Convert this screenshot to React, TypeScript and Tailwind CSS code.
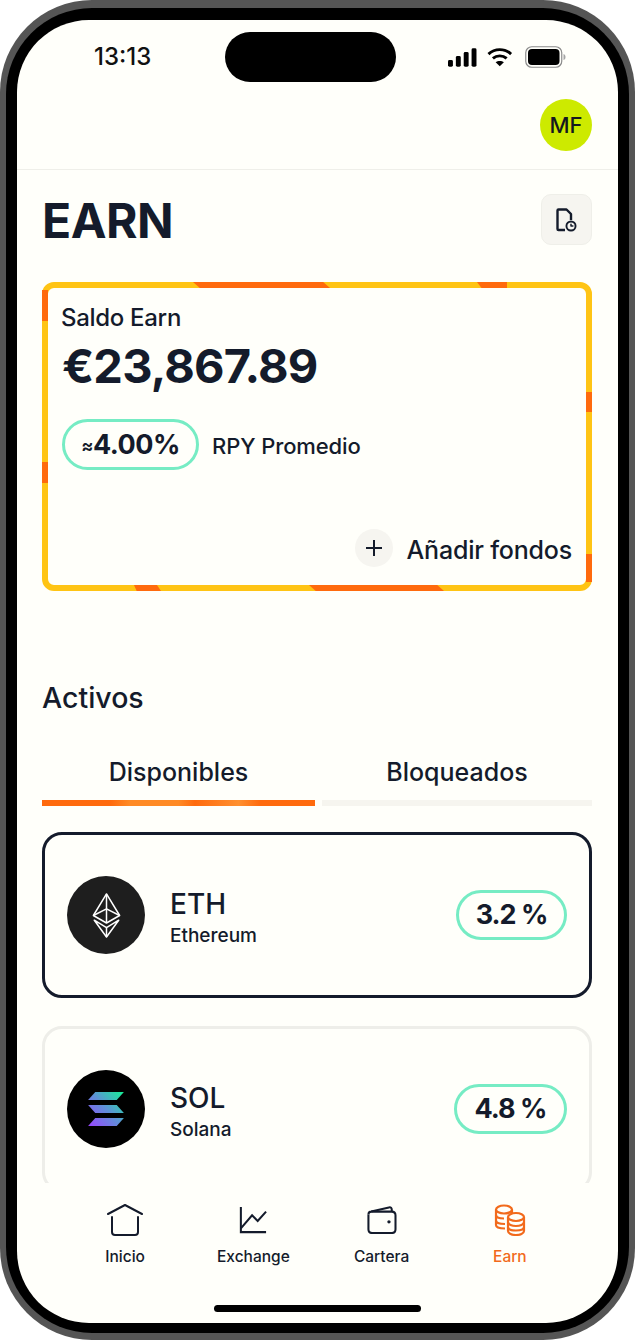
import React from 'react'

function Signal() {
  return (
    <svg width="30" height="19" viewBox="0 0 30 19" fill="#000">
      <rect x="0" y="12" width="5" height="7" rx="1.5" />
      <rect x="8" y="8" width="5" height="11" rx="1.5" />
      <rect x="16" y="4" width="5" height="15" rx="1.5" />
      <rect x="24" y="0" width="5" height="19" rx="1.5" />
    </svg>
  )
}

function Wifi() {
  return (
    <svg width="26" height="20" viewBox="0 0 26 20" fill="none" stroke="#000" strokeWidth="3">
      <path d="M1.5 7 C8 1 18 1 24.5 7" />
      <path d="M6 11.5 C10 8 16 8 20 11.5" />
      <path d="M13 19.5 L8.8 15.4 C11 13.6 15 13.6 17.2 15.4 Z" fill="#000" stroke="none" />
    </svg>
  )
}

function Battery() {
  return (
    <svg width="41" height="22" viewBox="0 0 41 22" fill="none">
      <rect x="0.75" y="0.75" width="36" height="20.5" rx="6" stroke="#8b8b8b" strokeWidth="1.2" />
      <rect x="3" y="3" width="31.5" height="16" rx="4" fill="#000" />
      <path d="M38.5 8 C40 8.5 40.5 9.5 40.5 11 C40.5 12.5 40 13.5 38.5 14 Z" fill="#a5a5a5" />
    </svg>
  )
}

function ReportIcon() {
  return (
    <svg width="21" height="24" viewBox="0 0 21 24" fill="none" stroke="#141b2b" strokeWidth="2.4" strokeLinejoin="round">
      <path d="M9 22 H2.5 Q1.5 22 1.5 21 V2.5 Q1.5 1.5 2.5 1.5 H10.5 L15 6 V12" />
      <circle cx="15" cy="18" r="5.5" fill="#141b2b" stroke="none" />
      <circle cx="15" cy="18" r="3.6" fill="#f6f5f0" stroke="none" />
      <path d="M15 15.8 V18 H17.4" strokeWidth="1.5" />
    </svg>
  )
}

function EthLogo() {
  return (
    <svg width="29" height="45" viewBox="0 0 30 48" fill="none" stroke="#fff" strokeWidth="1.6" strokeLinejoin="round">
      <path d="M15 1 L29 24 L15 32 L1 24 Z" />
      <path d="M15 1 V32" />
      <path d="M1 24 L15 17 L29 24" />
      <path d="M2 29 L15 37 L28 29 L15 47 Z" />
      <path d="M15 37 V47" />
    </svg>
  )
}

function SolLogo() {
  return (
    <svg width="38" height="34" viewBox="0 0 40 38">
      <defs>
        <linearGradient id="sol" x1="0" y1="38" x2="40" y2="0" gradientUnits="userSpaceOnUse">
          <stop offset="0" stopColor="#9a45ff" />
          <stop offset="0.5" stopColor="#5f8fd8" />
          <stop offset="1" stopColor="#14f195" />
        </linearGradient>
      </defs>
      <path d="M8 0 H40 L32 9 H0 Z" fill="url(#sol)" />
      <path d="M0 14.5 H32 L40 23.5 H8 Z" fill="url(#sol)" />
      <path d="M8 29 H40 L32 38 H0 Z" fill="url(#sol)" />
    </svg>
  )
}

function HomeIcon() {
  return (
    <svg width="36" height="32" viewBox="0 0 36 32" fill="none" stroke="#141b2b" strokeWidth="2" strokeLinecap="round" strokeLinejoin="round">
      <path d="M1 10 L18 1 L35 10" />
      <path d="M5 13 V28 Q5 31 8 31 H28 Q31 31 31 28 V13" />
    </svg>
  )
}

function ChartIcon() {
  return (
    <svg width="28" height="28" viewBox="0 0 30 30" fill="none" stroke="#141b2b" strokeWidth="2.2">
      <path d="M2 1 V28 H29" />
      <path d="M2 24 L14 10 L20 16 L29 6" />
    </svg>
  )
}

function WalletIcon() {
  return (
    <svg width="31" height="28" viewBox="0 0 32 30" fill="none" stroke="#141b2b" strokeWidth="2.2" strokeLinejoin="round">
      <path d="M2 9 Q2 6 5 6 L24 1.5 Q27 1 27 4 V6" />
      <path d="M5 6 H27 Q31 6 31 10 V25 Q31 29 27 29 H6 Q2 29 2 25 V9" />
      <circle cx="24" cy="17" r="1.8" fill="#141b2b" stroke="none" />
    </svg>
  )
}

function CoinsIcon() {
  return (
    <svg width="32" height="32" viewBox="0 0 32 32" fill="none" stroke="#f26a1b" strokeWidth="2.2">
      <ellipse cx="10" cy="5.5" rx="8" ry="4" />
      <path d="M2 5.5 V21 C2 23 5 24.5 11 24.5" />
      <path d="M18 5.5 V9" />
      <path d="M2 11 C2 13 5 14.5 10 14.5" />
      <path d="M2 16.5 C2 18.5 5 20 11 20" />
      <ellipse cx="22" cy="13" rx="8" ry="4" fill="#fffffa" />
      <path d="M14 13 V27 C14 29.5 18 31 22 31 C26 31 30 29.5 30 27 V13" />
      <path d="M14 18 C14 20.5 18 22 22 22 C26 22 30 20.5 30 18" />
      <path d="M14 23 C14 25.5 18 26.5 22 26.5 C26 26.5 30 25.5 30 23" />
    </svg>
  )
}

function AssetCard({ symbol, name, rate, active, pillWidth, logo, logoBg }: {
  symbol: string
  name: string
  rate: string
  active?: boolean
  pillWidth: string
  logo: React.ReactNode
  logoBg: string
}) {
  return (
    <div className={`h-[166px] shrink-0 rounded-[20px] border-[3px] pl-[22px] pr-[22px] flex items-center ${active ? 'border-[#141b2b]' : 'border-[#eeeee9]'}`}>
      <div className={`w-[78px] h-[78px] rounded-full flex items-center justify-center ${logoBg}`}>{logo}</div>
      <div className="ml-[25px] flex-1 pt-[4px]">
        <div className="text-[28px] leading-[34px] font-medium">{symbol}</div>
        <div className="text-[19px] leading-[24px] mt-[3px] font-medium">{name}</div>
      </div>
      <div className={`h-[50px] rounded-full border-[3px] border-[#76ecc4] flex items-center justify-center text-[27px] font-bold tracking-[-1px] ${pillWidth}`}>{rate}</div>
    </div>
  )
}

function NavItem({ label, icon, active }: { label: string; icon: React.ReactNode; active?: boolean }) {
  return (
    <div className={`flex flex-col items-center ${active ? 'text-[#f26a1b]' : 'text-[#141b2b]'}`}>
      <div className="h-[32px] flex items-center justify-center">{icon}</div>
      <div className="mt-[11px] text-[15.5px] leading-[20px] font-medium">{label}</div>
    </div>
  )
}

export default function App() {
  return (
    <div className="w-[635px] h-[1340px] rounded-[92px] bg-[#555555] pt-[8px] px-[6px] pb-[7px] font-[family-name:Inter,sans-serif] text-[#141b2b]">
      <div className="w-full h-full rounded-[86px] bg-black pt-[12px] px-[11px] pb-[10px]">
        <div className="w-full h-full rounded-[72px] bg-[#fffffa] overflow-hidden flex flex-col">

          {/* status bar */}
          <div className="h-[62px] shrink-0 pt-[12px] pl-[77px] pr-[52px] flex justify-between">
            <div className="h-[50px] w-[100px] flex items-center text-[24px] font-medium text-[#111]">13:13</div>
            <div className="h-[50px] w-[171px] rounded-full bg-black -ml-[22px]"></div>
            <div className="h-[50px] w-[118px] flex items-center gap-[10px]">
              <Signal />
              <Wifi />
              <div className="ml-[2px]"><Battery /></div>
            </div>
          </div>

          {/* header */}
          <div className="h-[88px] shrink-0 border-b border-[#efefe9] pt-[17px] pr-[26px] flex justify-end">
            <div className="w-[52px] h-[52px] rounded-full bg-[#cdea00] flex items-center justify-center text-[22px] font-medium text-[#14181f]">MF</div>
          </div>

          <div className="flex-1 overflow-hidden pl-[25px] pr-[26px] min-h-0">
            <div className="mt-[24px] h-[51px] flex items-center justify-between">
              <h1 className="text-[48px] font-bold tracking-[-0.5px] pt-[2px]">EARN</h1>
              <div className="w-[51px] h-[51px] rounded-[10px] bg-[#f6f5f0] border border-[#efefe9] flex items-center justify-center">
                <ReportIcon />
              </div>
            </div>

            {/* saldo card */}
            <div className="relative mt-[37px] h-[309px] rounded-[12px] border-[6px] border-[#ffc414] pl-[14px] pr-[14px] pt-[16px]">
              <span className="absolute -top-[6px] left-[145px] w-[137px] h-[6px] bg-[#ff6a0d] [clip-path:polygon(0_0,95%_0,100%_100%,5%_100%)]"></span>
              <span className="absolute -top-[6px] left-[429px] w-[30px] h-[6px] bg-[#ff6a0d] [clip-path:polygon(0_0,100%_0,100%_100%,15%_100%)]"></span>
              <span className="absolute -left-[6px] top-[2px] w-[6px] h-[31px] bg-[#ff6a0d]"></span>
              <span className="absolute -left-[6px] top-[174px] w-[6px] h-[21px] bg-[#ff6a0d]"></span>
              <span className="absolute -right-[6px] top-[104px] w-[6px] h-[20px] bg-[#ff6a0d]"></span>
              <span className="absolute -right-[6px] top-[266px] w-[6px] h-[28px] bg-[#ff6a0d]"></span>
              <span className="absolute -bottom-[6px] left-[86px] w-[27px] h-[6px] bg-[#ff6a0d] [clip-path:polygon(0_0,85%_0,100%_100%,10%_100%)]"></span>
              <span className="absolute -bottom-[6px] left-[261px] w-[135px] h-[6px] bg-[#ff6a0d] [clip-path:polygon(0_0,95%_0,100%_100%,5%_100%)]"></span>

              <div className="text-[24px] leading-[28px] font-medium tracking-[-0.3px] -ml-[1px]">Saldo Earn</div>
              <div className="mt-[7px] text-[47px] leading-[54px] font-bold tracking-[-0.8px]">€23,867.89</div>
              <div className="mt-[26px] flex items-center">
                <div className="w-[137px] h-[51px] pt-[2px] rounded-full border-[3px] border-[#76ecc4] flex items-center justify-center text-[27px] font-bold tracking-[-0.5px]">
                  <span className="text-[18px]">≈</span>4.00%
                </div>
                <div className="ml-[13px] pt-[3px] text-[22px] font-medium tracking-[-0.1px]">RPY Promedio</div>
              </div>
              <div className="mt-[57px] flex items-center justify-end">
                <div className="w-[38px] h-[38px] rounded-full bg-[#f6f5f0] flex items-center justify-center">
                  <svg width="16" height="16" viewBox="0 0 16 16" stroke="#141b2b" strokeWidth="2"><path d="M8 0 V16 M0 8 H16" /></svg>
                </div>
                <div className="ml-[14px] pt-[5px] text-[25px] font-medium tracking-[-0.2px]">Añadir fondos</div>
              </div>
            </div>

            <h2 className="mt-[91px] text-[28.5px] leading-[32px] font-medium">Activos</h2>

            {/* tabs */}
            <div className="mt-[42px] flex gap-[7px]">
              <div className="w-[273px] flex flex-col items-center">
                <div className="text-[25px] leading-[30px] font-medium h-[44px] pt-[1px]">Disponibles</div>
                <div className="w-full h-[6px] bg-[linear-gradient(90deg,#ff6a0d_0%,#ff6a0d_25%,#ff8a25_32%,#ff8a25_50%,#ff6a0d_56%,#ff9030_72%,#ff6a0d_80%,#ff6a0d_100%)]"></div>
              </div>
              <div className="flex-1 flex flex-col items-center">
                <div className="text-[25px] leading-[30px] font-medium h-[44px] pt-[1px]">Bloqueados</div>
                <div className="w-full h-[6px] bg-[#f6f5ef]"></div>
              </div>
            </div>

            <div className="mt-[26px] flex flex-col gap-[28px]">
              <AssetCard symbol="ETH" name="Ethereum" rate="3.2 %" active pillWidth="w-[111px]" logo={<EthLogo />} logoBg="bg-[#1e1e1e]" />
              <AssetCard symbol="SOL" name="Solana" rate="4.8 %" pillWidth="w-[113px]" logo={<SolLogo />} logoBg="bg-black" />
            </div>
          </div>

          {/* bottom nav */}
          <div className="h-[140px] shrink-0 flex flex-col">
            <div className="mt-[21px] px-[44px] grid grid-cols-4">
              <NavItem label="Inicio" icon={<HomeIcon />} />
              <NavItem label="Exchange" icon={<ChartIcon />} />
              <NavItem label="Cartera" icon={<WalletIcon />} />
              <NavItem label="Earn" icon={<CoinsIcon />} active />
            </div>
            <div className="mt-[38px] mx-auto w-[207px] h-[7px] rounded-full bg-black"></div>
          </div>
        </div>
      </div>
    </div>
  )
}
